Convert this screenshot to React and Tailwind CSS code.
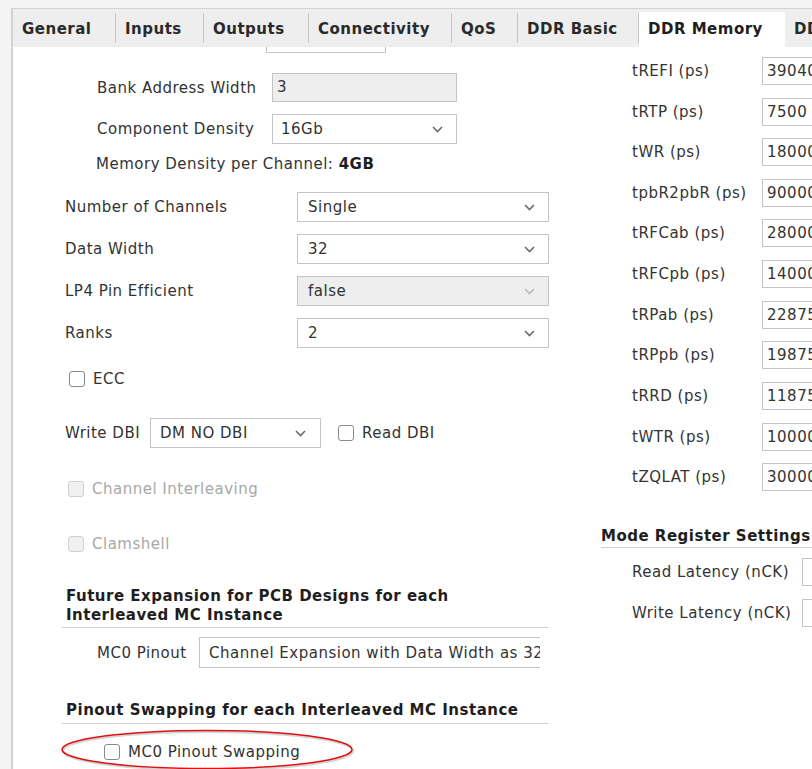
import React from "react";

const Chevron = ({ light }) => (
  <svg width="11" height="7" viewBox="0 0 11 7" className="shrink-0">
    <polyline points="1,1 5.5,5.5 10,1" fill="none" stroke={light ? "#b8b8b8" : "#6a6a6a"} strokeWidth="1.6" />
  </svg>
);

const Check = ({ disabled }) => (
  <div
    className={
      disabled
        ? "w-[16px] h-[16px] rounded-[3px] border border-[#cfcfcf] bg-[#f0f0f0] shrink-0"
        : "w-[16px] h-[16px] rounded-[3px] border border-[#8a8a8a] bg-white shrink-0"
    }
  />
);

const tabs = [
  { t: "General", c: "w-[103px]" },
  { t: "Inputs", c: "w-[88px]" },
  { t: "Outputs", c: "w-[105px]" },
  { t: "Connectivity", c: "w-[143px]" },
  { t: "QoS", c: "w-[66px]" },
  { t: "DDR Basic", c: "w-[121px]" },
];

const timing = [
  ["tREFI (ps)", "39040", "mt-[10px]"],
  ["tRTP (ps)", "7500", "mt-[13px]"],
  ["tWR (ps)", "18000", "mt-[12px]"],
  ["tpbR2pbR (ps)", "90000", "mt-[13px]"],
  ["tRFCab (ps)", "28000", "mt-[12px]"],
  ["tRFCpb (ps)", "14000", "mt-[13px]"],
  ["tRPab (ps)", "22875", "mt-[13px]"],
  ["tRPpb (ps)", "19875", "mt-[12px]"],
  ["tRRD (ps)", "11875", "mt-[13px]"],
  ["tWTR (ps)", "10000", "mt-[13px]"],
  ["tZQLAT (ps)", "30000", "mt-[12px]"],
];

const selRows = [
  ["Number of Channels", "Single", false, "mt-[18px]"],
  ["Data Width", "32", false, "mt-[12px]"],
  ["LP4 Pin Efficient", "false", true, "mt-[12px]"],
  ["Ranks", "2", false, "mt-[12px]"],
];

export default function App() {
  return (
    <div
      className="w-[812px] h-[769px] overflow-hidden bg-[#f4f4f4] text-[#333333] text-[15px] tracking-[0.5px] relative"
      style={{ fontFamily: '"DejaVu Sans", Verdana, sans-serif' }}
    >
      <div className="h-[8px]" />
      <div className="ml-[11px] border-l-2 border-t border-[#d2d2d2] h-[761px] flex flex-col">
        {/* Tabs */}
        <div className="h-[38px] flex items-end bg-[#eeeeee] shrink-0">
          {tabs.map((x) => (
            <div key={x.t} className={`${x.c} h-full flex items-center pl-[9px] pt-[2px] font-bold text-[#2a2a2a] shrink-0 relative whitespace-nowrap`}>
              {x.t}
              <div className="absolute right-0 top-[4px] bottom-[4px] w-px bg-[#c6c6c6]" />
            </div>
          ))}
          <div className="w-[146px] h-[35px] bg-white flex items-center pl-[9px] font-bold text-[#1e1e1e] shrink-0 whitespace-nowrap">
            DDR Memory
          </div>
          <div className="h-full flex items-center pl-[9px] pt-[2px] font-bold text-[#2a2a2a] whitespace-nowrap">DDR</div>
        </div>

        <div className="flex-1 bg-white flex">
          {/* Left column */}
          <div className="w-[575px] shrink-0 flex flex-col">
            <div className="ml-[253px] w-[120px] h-[6px] border-x border-b border-[#c4c4c4]" />

            <div className="mt-[20px] pl-[84px] flex items-center">
              <div className="w-[175px] pt-[2px]">Bank Address Width</div>
              <div className="w-[185px] h-[29px] border border-[#c4c4c4] bg-[#eeeeee] flex items-center pl-[4px]">3</div>
            </div>
            <div className="mt-[12px] pl-[84px] flex items-center">
              <div className="w-[175px]">Component Density</div>
              <div className="w-[185px] h-[30px] border border-[#c4c4c4] bg-white flex items-center justify-between pl-[8px] pr-[13px]">
                <span>16Gb</span>
                <Chevron />
              </div>
            </div>
            <div className="mt-[10px] pl-[83px] h-[20px] flex items-center whitespace-nowrap">
              Memory Density per Channel:&nbsp;<span className="font-bold text-[#1e1e1e]">4GB</span>
            </div>

            {selRows.map(([l, v, d, m]) => (
              <div key={l} className={`${m} pl-[52px] flex items-center`}>
                <div className="w-[232px]">{l}</div>
                <div
                  className={
                    d
                      ? "w-[252px] h-[30px] border border-[#c4c4c4] bg-[#eeeeee] flex items-center justify-between pl-[10px] pr-[13px]"
                      : "w-[252px] h-[30px] border border-[#c4c4c4] bg-white flex items-center justify-between pl-[10px] pr-[13px]"
                  }
                >
                  <span>{v}</span>
                  <Chevron light={d} />
                </div>
              </div>
            ))}

            <div className="mt-[21px] pl-[56px] h-[20px] flex items-center gap-[8px]">
              <Check />
              <span>ECC</span>
            </div>

            <div className="mt-[29px] pl-[52px] flex items-center">
              <div className="w-[85px] whitespace-nowrap">Write DBI</div>
              <div className="w-[171px] h-[30px] border border-[#c4c4c4] bg-white flex items-center justify-between pl-[9px] pr-[14px]">
                <span>DM NO DBI</span>
                <Chevron />
              </div>
              <div className="ml-[17px] flex items-center gap-[8px]">
                <Check />
                <span>Read DBI</span>
              </div>
            </div>

            <div className="mt-[31px] pl-[55px] h-[20px] flex items-center gap-[8px] text-[#a8a8a8]">
              <Check disabled />
              <span>Channel Interleaving</span>
            </div>
            <div className="mt-[35px] pl-[55px] h-[20px] flex items-center gap-[8px] text-[#a8a8a8]">
              <Check disabled />
              <span>Clamshell</span>
            </div>

            <div className="mt-[33px] pl-[53px] font-bold text-[#1e1e1e] leading-[19px] whitespace-nowrap">
              Future Expansion for PCB Designs for each
              <br />
              Interleaved MC Instance
            </div>
            <div className="mt-[2px] ml-[49px] w-[486px] h-px bg-[#cfcfcf]" />
            <div className="mt-[9px] pl-[84px] flex items-center">
              <div className="w-[102px] whitespace-nowrap pt-[1px]">MC0 Pinout</div>
              <div className="w-[341px] h-[31px] border-l border-y border-[#c4c4c4] bg-white flex items-center pl-[9px] pt-[1px] overflow-hidden whitespace-nowrap">
                Channel Expansion with Data Width as 32
              </div>
            </div>

            <div className="mt-[33px] pl-[53px] font-bold text-[#1e1e1e] leading-[19px] whitespace-nowrap">
              Pinout Swapping for each Interleaved MC Instance
            </div>
            <div className="mt-[3px] ml-[49px] w-[486px] h-px bg-[#cfcfcf]" />
            <div className="mt-[18px] pl-[91px] h-[20px] flex items-center gap-[8px]">
              <Check />
              <span>MC0 Pinout Swapping</span>
            </div>
          </div>

          {/* Right column */}
          <div className="flex-1 flex flex-col overflow-hidden">
            {timing.map(([l, v, m]) => (
              <div key={l} className={`${m} pl-[44px] flex items-center whitespace-nowrap`}>
                <div className="w-[130px] shrink-0 pt-[1px]">{l}</div>
                <div className="w-[100px] h-[28px] border border-[#c4c4c4] bg-white flex items-center pl-[4px] pt-[1px] shrink-0">{v}</div>
              </div>
            ))}
            <div className="mt-[35px] pl-[13px] font-bold text-[#1e1e1e] leading-[20px] whitespace-nowrap">
              Mode Register Settings
            </div>
            <div className="mt-[1px] ml-[13px] h-px bg-[#cfcfcf]" />
            <div className="mt-[10px] pl-[44px] flex items-center whitespace-nowrap">
              <div className="w-[170px] shrink-0 pt-[1px]">Read Latency (nCK)</div>
              <div className="w-[60px] h-[28px] border border-[#c4c4c4] bg-white shrink-0" />
            </div>
            <div className="mt-[13px] pl-[44px] flex items-center whitespace-nowrap">
              <div className="w-[170px] shrink-0 pt-[1px]">Write Latency (nCK)</div>
              <div className="w-[60px] h-[28px] border border-[#c4c4c4] bg-white shrink-0" />
            </div>
          </div>
        </div>
      </div>

      {/* Red annotation ellipse */}
      <svg className="absolute left-[58px] top-[727px] pointer-events-none" width="300" height="46" viewBox="0 0 300 46">
        <ellipse cx="150" cy="24" rx="145" ry="19" fill="none" stroke="#aaaaaa" strokeOpacity="0.5" strokeWidth="2" />
        <ellipse cx="149" cy="22.5" rx="145" ry="19" fill="none" stroke="#e01010" strokeWidth="1.6" />
      </svg>
    </div>
  );
}
